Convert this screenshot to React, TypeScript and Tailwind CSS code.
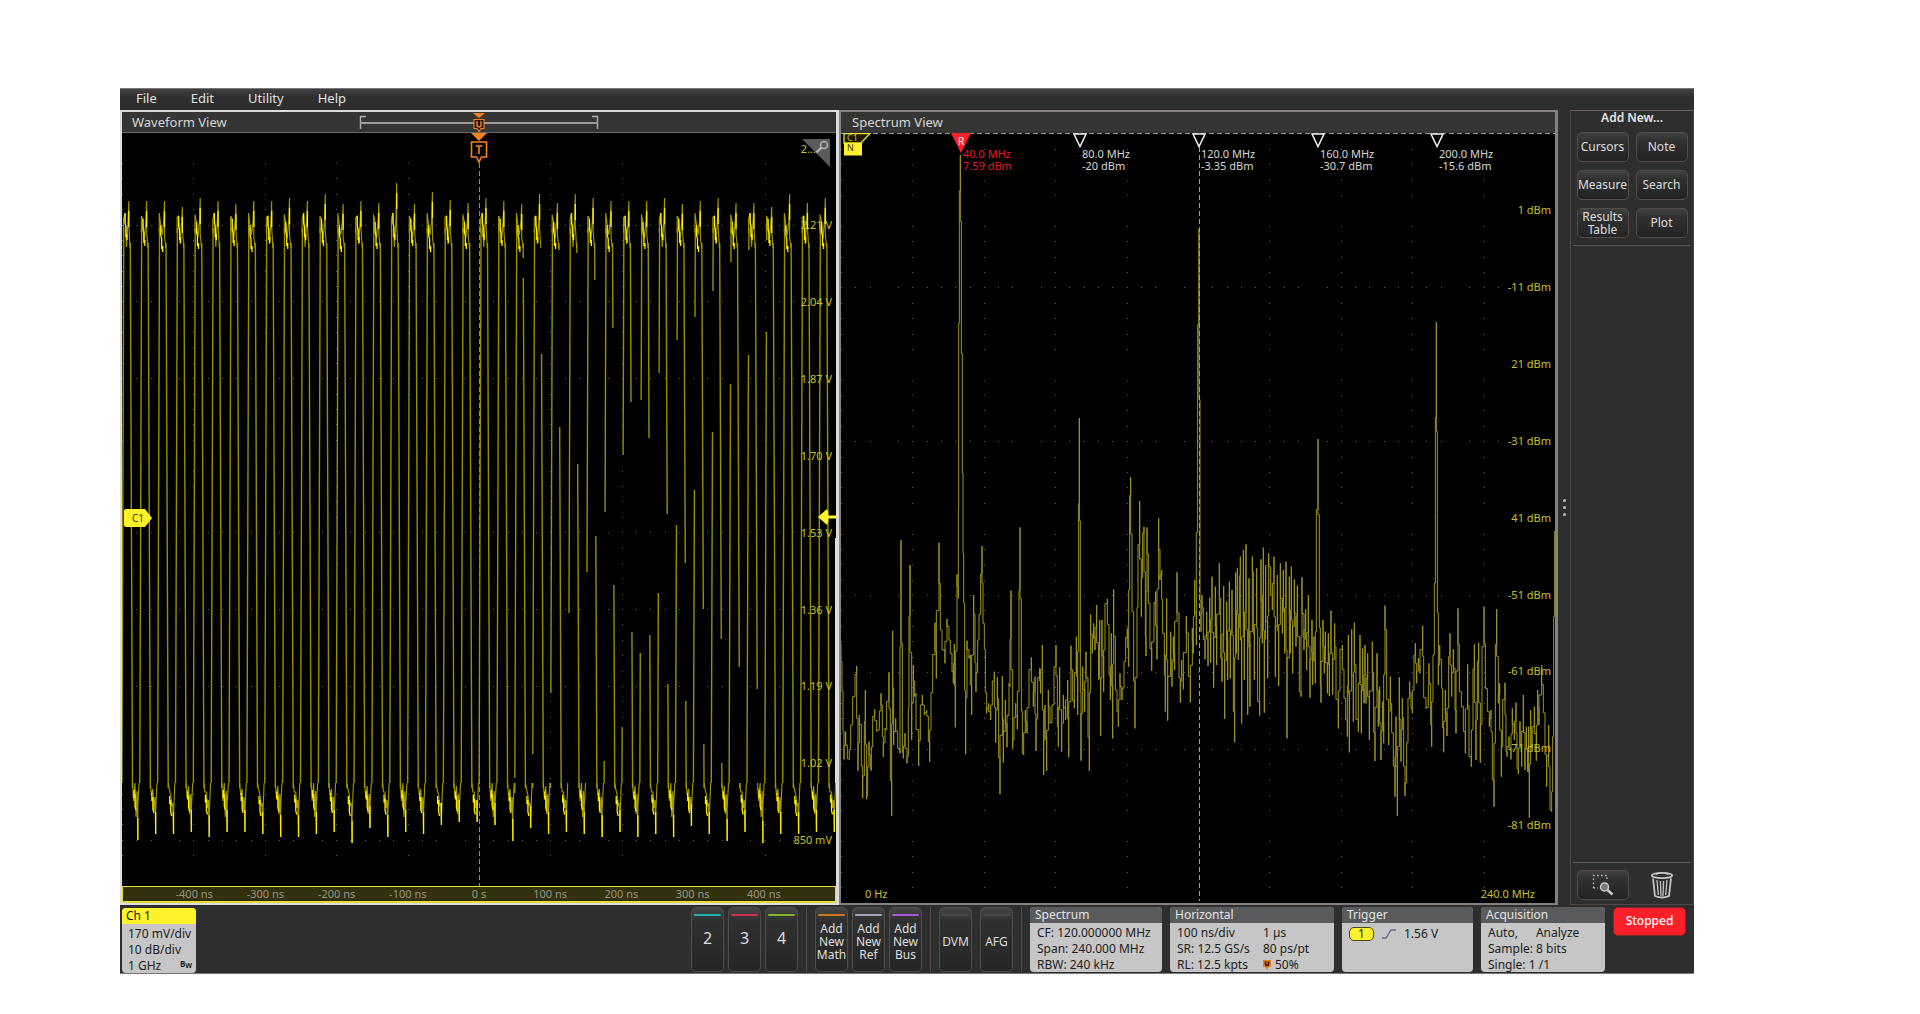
import type { ReactNode } from 'react'
import { clsx } from 'clsx'

const PLOT_W = 714
const WAVE_H = 753
const SPEC_H = 770

const PERIOD = 17.86

// top of every positive peak and bottom of every negative one, in plot pixels
const HIGHS = [
  68, 68, 68, 74, 65, 68, 71, 68, 68, 65, 68, 61, 71, 68, 70, 50, 71, 59, 67, 70,
  65, 68, 71, 61, 70, 61, 65, 68, 68, 68, 65, 71, 68, 65, 70, 70, 74, 61, 70, 65,
]
const LOWS = [
  707, 701, 701, 699, 704, 699, 699, 701, 704, 704, 701, 699, 710, 695, 704, 699, 701, 692, 689, 689,
  692, 708, 695, 701, 699, 701, 704, 699, 704, 701, 704, 693, 701, 708, 699, 710, 701, 701, 699, 699,
]

// undersampled edges: cycle -> [gap start, gap end]
const RISE_GAPS: Record<number, [number, number]> = {
  22: [645, 660], 23: [621, 655], 24: [560, 655], 25: [480, 650], 26: [439, 650], 27: [379, 628],
  28: [322, 594], 29: [267, 520], 30: [240, 460], 31: [207, 392], 32: [184, 357], 33: [158, 299],
  34: [129, 251], 35: [117, 222], 36: [107, 199],
}
const FALL_GAPS: Record<number, [number, number]> = {
  22: [125, 145], 23: [110, 221], 24: [117, 294], 25: [120, 331], 26: [147, 403], 27: [195, 452],
  28: [269, 499], 29: [305, 502], 30: [381, 551], 31: [430, 568], 32: [476, 611], 33: [506, 630],
  34: [534, 650], 35: [556, 657],
}

// x,y pairs in thirds of a pixel
const TRACE_A = `33,670 36,780 39,850 42,1018 47,935 52,1015 58,1018 62,960 68,870 75,790 80,738 84,1052 88,885 94,940
98,1135 103,1000 106,810 110,1138 113,1115 117,965 121,1040 124,1052 128,910 134,868 140,935 148,925 153,820 157,890
160,1010 165,925 170,930 177,757 181,975 185,1188 188,633 191,975 197,895 203,970 210,1000 213,360 217,980 220,1015
225,940 231,1030 235,990 237,740 240,435 245,960 250,735 254,830 258,820 266,1038 271,885 277,825 283,885 290,870
295,905 299,1025 303,835 308,800 315,608 319,775 327,368 331,610 336,650 345,730 351,597 357,640 361,680 366,720
370,790 373,672 376,922 381,463 385,535 386,0 388,-580 391,-795 394,-400 397,0 399,320 401,480 404,618 407,1003
411,662 417,715 421,705 425,885 431,525 435,640 438,815 443,700 447,620 452,545 456,378 459,600 463,620 466,755
470,880 476,850 482,900 487,810 493,755 497,968 502,772 506,900 510,1123 517,768 520,1028 526,840 531,982 537,790
540,800 543,512 548,985 552,935 557,850 562,928 567,700 570,322 574,750 577,995 581,1005 586,870 591,940 597,785
604,712 610,860 615,770 618,993 623,800 629,745 632,820 637,675 641,1065 645,855 650,1052 655,810 660,910 666,905
672,805 678,675 682,860 685,980 689,742 695,995 700,825 707,900 713,780 716,1012 723,677 728,820 733,865 739,650
743,885 746,505 748,-6 751,610 753,1022 758,740 764,875 768,695 774,850 778,1053 782,583 787,700 791,610 795,690
800,555 806,780 809,600 812,948 816,600 821,815 825,565 832,537 837,690 841,840 844,640 848,955 851,508 856,790
861,830 865,920 870,760 876,840 882,770 887,680 892,625 896,740 899,280 902,172 906,510 911,640 915,925 921,620
924,505 929,243 934,590 938,355 942,320 946,590 948,708 951,322 955,480 960,620 965,752 972,580 977,515 981,718
986,295 990,480 995,450 998,625 1003,655 1006,875 1010,535 1013,902 1022,635 1026,800 1030,650 1034,750 1041,457
1047,700 1051,848 1055,720 1060,808 1069,588 1075,690 1081,847 1087,625 1090,700 1094,480 1099,675 1103,0 1107,-573
1110,450 1113,635 1116,525 1120,600 1125,718 1130,575 1134,738 1139,533 1142,728 1146,470 1151,803 1156,500 1160,735
1168,430 1172,640 1176,785 1181,498 1184,897 1190,545 1193,780 1198,485 1201,775 1206,510 1210,780 1214,967 1217,458`

const TRACE_B = `107,458 109,700 112,445 115,720 118,525 121,410 125,910 130,390 133,780 138,373 143,885 147,475 150,860 157,410
160,500 163,780 170,445 173,800 179,887 183,418 187,670 190,383 193,878 197,435 203,775 206,400 212,480 217,570
222,410 226,770 232,465 236,798 241,430 247,640 250,450 254,700 258,425 261,955 268,470 271,700 274,440 278,760
283,478 288,680 292,497 298,800 303,830 306,472 312,690 317,568 320,750 325,525 330,833 336,600 338,795 342,650
346,790 349,480 354,57 358,510 361,735 363,848 369,600 373,760 376,635 382,820 385,640 388,828 393,572 398,825
404,610 408,750 415,925 420,700 427,675 432,820 437,850 442,950 445,645 448,997 455,628 460,905 463,608 468,860
475,935 480,645 484,940 488,685 492,850 495,675 498,850 503,700 508,960 517,665 521,850 525,1023 531,700 535,920
539,800 543,1020 548,845 551,970 555,557 560,700 566,975 571,770 575,930 580,945 585,1130 588,890 592,1188 598,772
603,1025 607,835 611,950 615,1128 620,1050 624,885 629,785 633,850 637,880 642,740 646,670 650,790 655,715 660,760
668,617 671,800 678,865 685,860 687,730 692,850 695,980 699,710 703,700 706,277 709,-293 712,360 715,795 719,675
725,760 728,850 731,997 736,810 741,948 746,780 750,640 755,830 760,688 765,800 768,940 774,565 778,780 784,850
790,870 796,1000 803,733 807,980 814,1040 819,820 823,673 828,1020 832,780 836,668 841,1028 846,800 852,560 856,780
862,830 868,920 873,870 877,1000 882,1160 886,780 890,567 895,850 899,790 904,1070 908,890 915,788 918,980 921,1010
927,950 933,1018 937,865 943,960 948,848 951,1030 955,1062 960,905 965,1040 970,825 975,1050 979,920 983,1055
986,920 988,1193 992,870 996,980 1003,860 1009,1022 1013,810 1017,915 1025,735 1030,850 1035,905 1040,1100 1046,915
1050,1165 1055,1175 1058,1055 1061,845 1064,333`

const VOLTS = ['2.21 V', '2.04 V', '1.87 V', '1.70 V', '1.53 V', '1.36 V', '1.19 V', '1.02 V', '850 mV']
const LEVELS = ['1 dBm', '-11 dBm', '21 dBm', '-31 dBm', '41 dBm', '-51 dBm', '-61 dBm', '-71 dBm', '-81 dBm']
const TIMES = ['-400 ns', '-300 ns', '-200 ns', '-100 ns', '0 s', '100 ns', '200 ns', '300 ns', '400 ns']
const MARKERS = [
  { freq: '40.0 MHz', level: '7.59 dBm', reference: true },
  { freq: '80.0 MHz', level: '-20 dBm' },
  { freq: '120.0 MHz', level: '-3.35 dBm' },
  { freq: '160.0 MHz', level: '-30.7 dBm' },
  { freq: '200.0 MHz', level: '-15.6 dBm' },
]

const pct = (v: number, total: number) => `${(v / total) * 100}%`

function Graticule({ top, height, skipCols, skipRows }: { top: number; height: number; skipCols: number[]; skipRows: number[] }) {
  const dots: string[] = []
  const dot = (x: number, y: number) => dots.push(`M${Math.round(x)} ${Math.round(y)}h1v1h-1z`)
  for (let c = 0; c < 10; c++) {
    if (skipCols.includes(c)) continue
    for (let j = 0; top + j * 15.38 < height; j++) {
      if (j % 5 === 4 && skipRows.includes((j - 4) / 5)) continue
      dot(c * 71.4, top + j * 15.38)
    }
  }
  for (let r = 0; r < 9; r++) {
    if (skipRows.includes(r)) continue
    for (let i = 0; i < 48; i++) if (i % 10 !== 3) dot(i * 14.28, top + (r * 5 + 4) * 15.38)
  }
  return <path d={dots.join('')} fill="#5c5c5c" />
}

function edge(x1: number, y1: number, x2: number, y2: number, gap?: [number, number]) {
  const at = (y: number) => x1 + ((x2 - x1) * (y - y1)) / (y2 - y1)
  if (!gap) return `M${x1} ${y1}L${x2} ${y2}`
  return `M${x1} ${y1}L${at(gap[0])} ${gap[0]}M${at(gap[1])} ${gap[1]}L${x2} ${y2}`
}

// the scope draws each sample column as a vertical bar
function columns(trace: string) {
  const pts = trace.split(/\s+/).map((p) => p.split(',').map(Number))
  return pts
    .map(([x, y], i) => (i === 0 ? `M${x} ${y}` : `V${Math.round((pts[i - 1][1] + y) / 2)}H${x}V${y}`))
    .join('')
}

function Waveform() {
  const edges: string[] = []
  const ringing: string[] = []
  const bright: string[] = []
  HIGHS.forEach((high, n) => {
    const x = 1.5 + n * PERIOD
    const low = LOWS[n]
    const a = ((n * 7) % 5) * 3
    edges.push(edge(x + 0.3, 95, x - 1.6, 650, RISE_GAPS[n]))
    edges.push(edge(x + 6.8, 110, x + 9, 655, FALL_GAPS[n]))
    ringing.push(
      `M${x} 100V${86 - a / 2}L${x + 1.5} ${80 + a}L${x + 3} ${114 - a}L${x + 4.5} 88L${x + 5.3} ${high}V${92 + a}L${x + 6.6} 115`,
    )
    ringing.push(
      `M${x + 9} 650L${x + 10} ${668 - a}L${x + 11.5} ${650 + a}L${x + 12.5} ${684 - a}L${x + 13.5} ${658 + a}L${x + 14.3} ${low}V${672 + a}L${x + 15.6} 650`,
    )
    bright.push(`M${x + 1.5} ${80 + a}v10l1 4v10l1 -3v6`)
    bright.push(`M${x + 5.3} ${high + 10}v16`)
    bright.push(`M${x + 10.5} ${657 + a / 2}v8l1 -4v12l1 4`)
    bright.push(`M${x + 14.3} ${low - 22}V${low}`)
  })
  return (
    <svg viewBox={`0 0 ${PLOT_W} ${WAVE_H}`} preserveAspectRatio="none" className="absolute inset-0 size-full" fill="none">
      <Graticule top={30} height={725} skipCols={[5, 8]} skipRows={[3, 7]} />
      <path d={edges.join('')} stroke="#978f00" strokeWidth="1.4" />
      <path d={ringing.join('')} stroke="#a39a00" strokeWidth="1.1" />
      <path d={bright.join('')} stroke="#fff000" strokeWidth="1.3" />
      <path d="M713.500 405V650" stroke="#fff22d" />
      <path d="M357.500 30V753" stroke="#8a8a8a" strokeDasharray="5 3" />
    </svg>
  )
}

function Spectrum() {
  return (
    <svg viewBox={`0 0 ${PLOT_W} ${SPEC_H}`} preserveAspectRatio="none" className="absolute inset-0 size-full" fill="none">
      <Graticule top={16} height={765} skipCols={[5]} skipRows={[0, 2, 4, 8]} />
      <g stroke="#9f9722" strokeWidth="3" strokeLinejoin="bevel">
        <path d={columns(TRACE_A)} transform="translate(-11 287) scale(.33333)" />
        <path d={columns(TRACE_B)} transform="translate(359 287) scale(.33333)" />
      </g>
      <path d="M0 .5H714" stroke="#9a9a9a" strokeDasharray="5 3" />
      <path d="M358.500 14V768" stroke="#a0a0a0" strokeDasharray="5 3" />
    </svg>
  )
}

function AxisLabels({ labels, first, height }: { labels: string[]; first: number; height: number }) {
  return labels.map((label, i) => (
    <span
      key={label}
      className="absolute right-1 -translate-y-1/2 text-[11px] leading-3 text-[#c9c129]"
      style={{ top: pct(first + i * 76.9, height) }}
    >
      {label}
    </span>
  ))
}

function WaveformView() {
  return (
    <section className="flex min-w-0 flex-1 flex-col border-y-2 border-l-2 border-r-3 border-[#dcdcdc] bg-black">
      <header className="relative h-[21px] shrink-0 border-b border-[#66686c] bg-[#353534] px-2.5 text-[13px] leading-5 text-[#d6d6d6]">
        <h2>Waveform View</h2>
        <svg viewBox="0 0 240 20" className="absolute left-1/2 top-0 h-5 w-60 -translate-x-1/2" fill="none">
          <path d="M7 4.500H1.500V17M233 4.500h5.500V17" stroke="#b0b0b0" strokeWidth="1.400" />
          <path d="M1 11H239" stroke="#9c9c9c" strokeWidth="2" />
          <path d="M114 1h12l-6 5z" fill="#f58220" />
          <path d="M115 7.500h10v9h-3l-2 3-2-3h-3z" fill="#1c1005" stroke="#f58220" strokeWidth="1.200" />
          <path d="M118 9v4q0 2 2 2t2-2V9" stroke="#f58220" strokeWidth="1.500" />
        </svg>
      </header>
      <div className="relative flex-1">
        <Waveform />
        <svg viewBox="0 0 18 32" className="absolute left-1/2 top-0 h-8 w-4.5 -translate-x-1/2" fill="none">
          <path d="M1 0h16L9 8z" fill="#f58220" />
          <path d="M1.500 9h15v15h-5l-2.500 5-2.500-5h-5z" fill="#000" stroke="#f58220" strokeWidth="1.600" />
          <path d="M5.500 13h7M9 13v8" stroke="#f58220" strokeWidth="1.600" />
        </svg>
        <span className="absolute right-5 top-2.5 text-[11px] leading-3 text-[#c9c129]">2...</span>
        <AxisLabels labels={VOLTS} first={92} height={WAVE_H} />
        <svg viewBox="0 0 28 28" className="absolute right-1.5 top-1.5 size-7" fill="none">
          <path d="M0 0h28v28z" fill="#5b5b5b" />
          <circle cx="22" cy="6" r="3.500" stroke="#b5b5b5" strokeWidth="1.500" />
          <path d="M19.500 8.500l-5 5" stroke="#b5b5b5" strokeWidth="2.400" />
        </svg>
        <div className="absolute left-0.5 -translate-y-1/2" style={{ top: pct(385, WAVE_H) }}>
          <svg viewBox="0 0 28 18" className="h-[18px] w-7">
            <path d="M2 0h19l7 9-7 9H2q-2 0-2-2V2q0-2 2-2z" fill="#fff22d" />
          </svg>
          <span className="absolute left-2 top-1 text-[10px] leading-[10px] text-[#3a3600]">C1</span>
        </div>
        <svg viewBox="0 0 18 16" className="absolute right-0 h-4 w-4.5 -translate-y-1/2" style={{ top: pct(384, WAVE_H) }}>
          <path d="M0 8l9-8q2 5 1 6.500h8v3h-8q1 2-1 6.500z" fill="#fff22d" />
        </svg>
      </div>
      <div className="relative h-[17px] shrink-0 border border-b-2 border-[#e6dc3c] bg-[#33300d]">
        {TIMES.map((t, i) => (
          <span
            key={t}
            className="absolute top-0 -translate-x-1/2 text-[11px] leading-[14px] text-[#96958a]"
            style={{ left: pct((i + 1) * 71.4, PLOT_W) }}
          >
            {t}
          </span>
        ))}
      </div>
    </section>
  )
}

function SpectrumView() {
  return (
    <section className="flex min-w-0 flex-1 flex-col border-y-2 border-l-2 border-r-3 border-[#858181] bg-black">
      <header className="h-[21px] shrink-0 bg-[#353534] px-[11px] text-[13px] leading-5 text-[#d6d6d6]">
        <h2>Spectrum View</h2>
      </header>
      <div className="relative flex-1">
        <Spectrum />
        <svg viewBox="0 0 30 23" className="absolute left-0.5 top-0 h-[23px] w-[30px]" fill="none">
          <path d="M1 .5h26l-9 9.500H1z" fill="#1c1a02" stroke="#e8df30" strokeWidth="1.300" />
          <path d="M1 10h18v12.500H1z" fill="#fff22d" />
        </svg>
        <span className="absolute left-1.5 top-0 text-[9px] leading-[9px] text-[#c9c129]">C1</span>
        <span className="absolute left-1.5 top-2.5 text-[9px] leading-[10px] text-[#3a3600]">N</span>
        {MARKERS.map((m, i) => (
          <div key={m.freq} className="absolute top-0" style={{ left: pct((i + 1) * 119 + 1, PLOT_W) }}>
            {m.reference ? (
              <>
                <svg viewBox="0 0 20 20" className="absolute top-0 size-5 -translate-x-1/2">
                  <path d="M0 0h20L10 20z" fill="#ff1f28" />
                </svg>
                <span className="absolute top-0.5 -translate-x-1/2 text-[10px] leading-3 text-white">R</span>
              </>
            ) : (
              <svg viewBox="0 0 14 15" className="absolute top-0 h-[15px] w-3.5 -translate-x-1/2" fill="none">
                <path d="M1 1h12L7 13.500z" stroke="#f2f2f2" strokeWidth="1.500" />
              </svg>
            )}
            <div className={clsx('ml-0.5 mt-[15px] text-[11px] leading-3 whitespace-nowrap', m.reference ? 'text-[#e01b24]' : 'text-[#d8d8d8]')}>
              <p>{m.freq}</p>
              <p>{m.level}</p>
            </div>
          </div>
        ))}
        <AxisLabels labels={LEVELS} first={77} height={SPEC_H} />
        <span className="absolute bottom-0.5 left-6 text-[11px] leading-[14px] text-[#c9c129]">0 Hz</span>
        <span className="absolute bottom-0.5 right-5 text-[11px] leading-[14px] text-[#c9c129]">240.0 MHz</span>
      </div>
    </section>
  )
}

function SideButton({ children, label }: { children: ReactNode; label?: string }) {
  return (
    <button
      aria-label={label}
      className="flex h-[30px] w-[52px] items-center justify-center rounded-[5px] border border-[#544c48] bg-linear-to-b from-[#414141] via-[#303030] via-30% to-[#242424] pb-px text-center text-xs leading-[13px] text-[#dedede]"
    >
      {children}
    </button>
  )
}

function SidePanel() {
  return (
    <aside className="flex w-[124px] shrink-0 flex-col border border-[#4e4946] border-t-[#6a625e] bg-[#2e2e2e] px-0.5">
      <h2 className="h-[21px] pl-1.5 pr-7 text-right text-xs font-semibold leading-[14px] text-[#e4e4e4]">Add New...</h2>
      <div className="grid grid-cols-2 justify-items-center gap-y-2 pb-[7px]">
        {['Cursors', 'Note', 'Measure', 'Search', 'Results Table', 'Plot'].map((name) => (
          <SideButton key={name}>{name}</SideButton>
        ))}
      </div>
      <hr className="border-[#5a5a5a]" />
      <div className="mt-auto grid grid-cols-2 items-center justify-items-center border-t border-[#5a5a5a] pb-1 pt-[7px]">
        <SideButton label="Zoom to area">
          <svg viewBox="0 0 22 22" className="size-5.5" fill="none">
            <path d="M1.500 14V1.500H15v4M1.500 14H6" stroke="#b8b8b8" strokeWidth="1.400" strokeDasharray="1.600 2.400" />
            <circle cx="12.500" cy="13" r="4" fill="#777" stroke="#c8c8c8" strokeWidth="1.500" />
            <path d="M15.500 16l5 4.500" stroke="#c8c8c8" strokeWidth="2.600" />
          </svg>
        </SideButton>
        <button aria-label="Delete">
          <svg viewBox="0 0 24 28" className="h-7 w-6" fill="none" stroke="#c4c4c4">
            <ellipse cx="12" cy="4.500" rx="10.200" ry="2.600" strokeWidth="1.800" />
            <path d="M6 3.500q6-3.500 12 0" strokeWidth="1.200" />
            <path d="M3 7.500l2 17.500q7 3 14 0l2-17.500" strokeWidth="1.800" />
            <path d="M7 9l1.300 15M10.400 10l.6 15M13.600 10l-.6 15M17 9l-1.300 15" strokeWidth="1.300" />
          </svg>
        </button>
      </div>
    </aside>
  )
}

function BarButton({ children, stripe, big }: { children: ReactNode; stripe: string; big?: boolean }) {
  return (
    <button className="flex h-[65px] w-[33px] flex-col items-center rounded-[5px] border border-[#544c48] bg-linear-to-b from-[#454545] via-[#303030] via-20% to-[#262626] pt-1.5 text-[#dedede]">
      <span className={clsx('h-0.5 w-[27px] shrink-0 rounded-sm', stripe)} />
      <span className={clsx('flex flex-1 items-center text-center', big ? 'pb-3 text-base' : 'pb-1 text-[12px] leading-[13px]')}>
        {children}
      </span>
    </button>
  )
}

function Divider() {
  return <span className="h-[65px] w-px shrink-0 bg-[#544c48]" />
}

function Badge({ title, className, children }: { title: string; className: string; children: ReactNode }) {
  return (
    <section className={clsx('h-[65px] overflow-hidden rounded-[4px] bg-[#c6c6c6] text-xs text-[#1c1c1c]', className)}>
      <h2 className="h-4 bg-[#595a5c] pl-[5px] leading-[15px] text-[#e4e4e4]">{title}</h2>
      <div className="px-[7px] pt-0.5 leading-4">{children}</div>
    </section>
  )
}

function BottomBar() {
  return (
    <footer className="flex h-[69px] shrink-0 items-start border-b border-[#777] bg-[#2e2e2e] pl-0.5 pr-2 pt-0.5">
      <section className="mt-px h-[65px] w-[74px] overflow-hidden rounded-[4px] bg-[#c6c6c6] text-xs text-[#1c1c1c]">
        <h2 className="h-4 bg-[#fff22d] pl-1 leading-[15px]">Ch 1</h2>
        <div className="relative pl-1.5 pt-0.5 leading-4">
          <p>170 mV/div</p>
          <p>10 dB/div</p>
          <p>1 GHz</p>
          <span className="absolute bottom-1.5 right-1 flex text-[8px] font-bold leading-2">
            B<sub className="bottom-0 top-0.5 text-[7px] leading-2">W</sub>
          </span>
        </div>
      </section>
      <div className="ml-auto flex items-center gap-2">
        <div className="flex gap-1">
          <BarButton stripe="bg-[#22b2b8]" big>2</BarButton>
          <BarButton stripe="bg-[#c8324e]" big>3</BarButton>
          <BarButton stripe="bg-[#82b22a]" big>4</BarButton>
        </div>
        <Divider />
        <div className="flex gap-1">
          <BarButton stripe="bg-[#cf7a22]">Add New Math</BarButton>
          <BarButton stripe="bg-[#a5a3b4]">Add New Ref</BarButton>
          <BarButton stripe="bg-[#ae55d8]">Add New Bus</BarButton>
        </div>
        <Divider />
        <div className="flex gap-2">
          <BarButton stripe="bg-[#4a4b4c]">DVM</BarButton>
          <BarButton stripe="bg-[#4a4b4c]">AFG</BarButton>
        </div>
        <Divider />
        <Badge title="Spectrum" className="w-[132px]">
          <p>CF: 120.000000 MHz</p>
          <p>Span: 240.000 MHz</p>
          <p>RBW: 240 kHz</p>
        </Badge>
        <Badge title="Horizontal" className="w-[164px]">
          <div className="grid grid-cols-[86px_1fr]">
            <p>100 ns/div</p>
            <p>1 µs</p>
            <p>SR: 12.5 GS/s</p>
            <p>80 ps/pt</p>
            <p>RL: 12.5 kpts</p>
            <p className="flex items-center gap-1">
              <svg viewBox="0 0 8 10" className="h-2.5 w-2" fill="none">
                <path d="M0 0h8v7H6l-2 3-2-3H0z" fill="#e87a1c" />
                <path d="M2.500 1.500v2.500q0 1.500 1.500 1.500t1.500-1.500V1.500" stroke="#1c1005" strokeWidth="1.500" />
              </svg>
              50%
            </p>
          </div>
        </Badge>
        <Badge title="Trigger" className="w-[131px]">
          <div className="flex items-center pt-px">
            <span className="h-[14px] w-[25px] rounded-[5px] border border-[#4a4710] bg-[#fff22d] text-center leading-3">1</span>
            <svg viewBox="0 0 14 10" className="ml-2 h-2.5 w-3.5" fill="none">
              <path d="M0 9h4L9 1h5" stroke="#6a6690" strokeWidth="1.300" />
            </svg>
            <span className="ml-2">1.56 V</span>
          </div>
        </Badge>
        <Badge title="Acquisition" className="w-[124px]">
          <p className="flex gap-4.5">
            <span>Auto,</span>
            <span>Analyze</span>
          </p>
          <p>Sample: 8 bits</p>
          <p>Single: 1 /1</p>
        </Badge>
        <button className="h-[29px] w-[73px] self-start rounded-[5px] border border-[#7a2a2c] bg-[#ff1f28] pb-0.5 text-xs font-medium text-white">
          Stopped
        </button>
      </div>
    </footer>
  )
}

export default function App() {
  return (
    <div className="flex h-screen min-h-[600px] min-w-[1400px] flex-col bg-white pb-10 pl-[120px] pr-[226px] pt-22 font-['Noto_Sans',sans-serif]">
      <nav className="flex h-[22px] shrink-0 gap-[34px] border-t border-[#777] bg-linear-to-b from-[#414141] to-[#2e2e2e] to-40% px-4 pb-[3px] text-[13px] leading-[18px] text-[#e0e0e0]">
        <button>File</button>
        <button>Edit</button>
        <button>Utility</button>
        <button>Help</button>
      </nav>
      <main className="flex min-h-0 flex-1 bg-[#2e2e2e]">
        <WaveformView />
        <SpectrumView />
        <div className="flex w-3 shrink-0 flex-col items-center justify-center gap-1">
          <span className="size-[3px] rounded-full bg-[#bdbdbd]" />
          <span className="size-[3px] rounded-full bg-[#bdbdbd]" />
          <span className="size-[3px] rounded-full bg-[#bdbdbd]" />
        </div>
        <SidePanel />
      </main>
      <BottomBar />
    </div>
  )
}
